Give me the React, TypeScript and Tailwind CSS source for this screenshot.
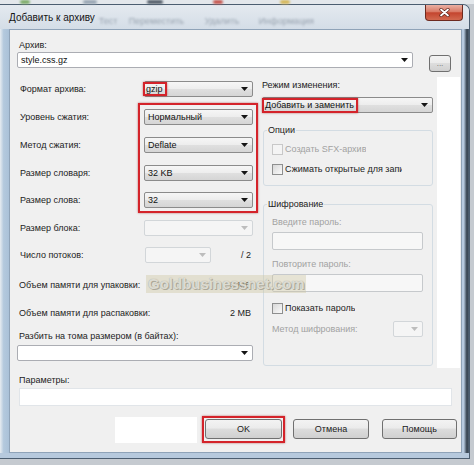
/**
 * 7-Zip style "Добавить к архиву" dialog, Windows 7 Aero frame.
 */
import type { ReactNode } from 'react'

function Arrow({ dim = false }: { dim?: boolean }) {
  return (
    <svg width="7" height="4" viewBox="0 0 7 4" className="ml-auto shrink-0">
      <path d="M0 0H7L3.5 4Z" fill={dim ? '#bdbdbd' : '#141414'} />
    </svg>
  )
}

type ComboKind = 'list' | 'edit' | 'off'

const comboSkin: Record<ComboKind, string> = {
  list: 'border-[#8b8b8b] bg-[linear-gradient(#f6f6f6,#ededed_48%,#dfdfdf_52%,#d5d5d5)]',
  edit: 'border-[#abadb3] bg-white',
  off: 'border-[#d2d6d9] bg-[#f5f5f5]',
}

function Combo({
  kind = 'list',
  width,
  mark = false,
  children,
}: {
  kind?: ComboKind
  width: string
  mark?: boolean
  children?: ReactNode
}) {
  return (
    <div
      className={`flex h-[16px] shrink-0 items-center rounded-[2px] border pr-[4px] ${comboSkin[kind]} ${width} ${
        mark ? 'pl-0' : 'pl-[3px]'
      }`}
    >
      {children}
      <Arrow dim={kind === 'off'} />
    </div>
  )
}

const redMark = 'border-2 border-[#d4232a] shadow-[0_0_2px_rgba(150,0,0,0.55)]'

function Check({ label, disabled = false, clip }: { label: string; disabled?: boolean; clip?: string }) {
  return (
    <div className="flex h-[12px] items-center">
      <span
        className={`h-[11px] w-[11px] shrink-0 border ${
          disabled ? 'border-[#c8c8c8] bg-[#f4f4f4]' : 'border-[#8e8f8f] bg-[linear-gradient(135deg,#d8d8d8,#fafafa)]'
        }`}
      />
      <span
        className={`ml-[2px] overflow-hidden whitespace-nowrap ${clip ?? ''} ${
          disabled ? 'text-[#a2a2a2]' : 'text-[#1c1c1c]'
        }`}
      >
        {label}
      </span>
    </div>
  )
}

// Win7 push button skin, height is given where it is used
const winBtn =
  'flex items-center justify-center rounded-[3px] border border-[#707070] bg-[linear-gradient(#f3f3f3,#ebebeb_45%,#dddddd_50%,#d0d0d0)] text-[#1b1b1b]'

const leftRows = [
  { label: 'Формат архива:', value: 'gzip', gap: 'mt-0', mark: true },
  { label: 'Уровень сжатия:', value: 'Нормальный', gap: 'mt-[12px]' },
  { label: 'Метод сжатия:', value: 'Deflate', gap: 'mt-[12px]' },
  { label: 'Размер словаря:', value: '32 KB', gap: 'mt-[12px]' },
  { label: 'Размер слова:', value: '32', gap: 'mt-[11px]' },
]

export default function App() {
  return (
    <div className="flex h-[465px] w-[474px] flex-col overflow-hidden bg-[#c5cad0] font-['Liberation_Sans',Arial,sans-serif] text-[9px] leading-[12px] text-[#1c1c1c]">
      {/* blurred explorer toolbar behind the glass */}
      <div className="flex h-[4px] shrink-0 items-start bg-[#e3e7eb]">
        <span className="ml-[20px] h-[4px] w-[10px] rounded-full bg-[#7fae6a] blur-[1px]" />
        <span className="ml-[53px] h-[4px] w-[14px] rounded-full bg-[#9aa7b4] blur-[1px]" />
        <span className="ml-[50px] h-[4px] w-[16px] rounded-full bg-[#56606b] blur-[1px]" />
        <span className="ml-[50px] h-[4px] w-[10px] rounded-full bg-[#c7574f] blur-[1px]" />
        <span className="ml-[57px] h-[4px] w-[10px] rounded-full bg-[#d6b85a] blur-[1px]" />
      </div>

      <div className="flex h-[455px] w-[470px] shrink-0 flex-col rounded-tr-[7px] border-y border-r border-[#4b5d70] bg-[#b9cbdf]">
        {/* title bar */}
        <div className="flex h-[24px] shrink-0 items-start rounded-tr-[6px] bg-[linear-gradient(#e4e9ef,#d4dde7)]">
          <span className="ml-[9px] mt-[6px] text-[10px] leading-[13px] text-[#151515]">Добавить к архиву</span>
          <div className="ml-[4px] mt-[10px] flex text-[9px] text-[#98a3af] blur-[0.8px]">
            <span className="w-[30px]">Тест</span>
            <span className="w-[76px]">Переместить</span>
            <span className="w-[54px]">Удалить</span>
            <span>Информация</span>
          </div>
          <div className="ml-auto mr-[6px] flex h-[16px] w-[38px] items-center justify-center rounded-b-[4px] border border-t-0 border-[#6d2a1f] bg-[linear-gradient(#eab0a3,#d97a66_45%,#c4452f_52%,#d2694f)]">
            <svg width="11" height="9" viewBox="0 0 11 9">
              <path d="M2 1.5L9 7.5M9 1.5L2 7.5" stroke="#5b2218" strokeWidth="3.2" strokeLinecap="round" />
              <path d="M2 1.5L9 7.5M9 1.5L2 7.5" stroke="#ffffff" strokeWidth="1.8" strokeLinecap="round" />
            </svg>
          </div>
        </div>

        <div className="flex h-[424px] shrink-0">
          <div className="w-[9px] shrink-0 bg-[linear-gradient(90deg,#e7ecf1,#b4c9dd_40%,#aac1d8)]" />

          {/* client area */}
          <div className="flex h-[424px] w-[453px] shrink-0 flex-col border border-[#8fa3b8] bg-[#f0f0f0] pl-[7px] pt-[9px]">
            <div className="pl-[2px]">Архив:</div>
            <div className="mt-px flex items-start">
              <Combo kind="edit" width="w-[396px]">
                <span className="text-[#111]">style.css.gz</span>
              </Combo>
              <div className={`${winBtn} ml-[16px] mt-[3px] h-[17px] w-[22px] items-end pb-[3px] text-[8px] leading-[8px] text-[#666]`}>
                ...
              </div>
            </div>

            <div className="relative mt-[5px] flex h-[291px]">
              {/* left column */}
              <div className="flex w-[236px] shrink-0 flex-col pt-[4px]">
                {leftRows.map((r) => (
                  <div key={r.label} className={`flex h-[16px] items-center ${r.gap}`}>
                    <span className="w-[127px] shrink-0 pl-[3px]">{r.label}</span>
                    <Combo width="w-[109px]" mark={r.mark}>
                      {r.mark ? (
                        <span className={`${redMark} -ml-[2px] flex h-[14px] items-center pl-px pr-[2px] text-[#111]`}>
                          {r.value}
                        </span>
                      ) : (
                        <span className="text-[#111]">{r.value}</span>
                      )}
                    </Combo>
                  </div>
                ))}
                <div className="mt-[12px] flex h-[16px] items-center">
                  <span className="w-[127px] shrink-0 pl-[3px]">Размер блока:</span>
                  <Combo kind="off" width="w-[109px]" />
                </div>
                <div className="mt-[11px] flex h-[16px] items-center">
                  <span className="w-[128px] shrink-0 pl-[3px]">Число потоков:</span>
                  <Combo kind="off" width="w-[66px]" />
                  <span className="flex-1 pr-[2px] text-right">/ 2</span>
                </div>
                <div className="mt-[16px] flex pl-[2px] pr-[2px]">
                  <span>Объем памяти для упаковки:</span>
                  <span className="ml-auto">3 MB</span>
                </div>
                <div className="mt-[16px] flex pl-[2px] pr-[2px]">
                  <span>Объем памяти для распаковки:</span>
                  <span className="ml-auto">2 MB</span>
                </div>
                <div className="mt-[11px] pl-[2px]">Разбить на тома размером (в байтах):</div>
                <div className="mt-[3px]">
                  <Combo kind="edit" width="w-[236px]" />
                </div>
              </div>

              {/* right column */}
              <div className="ml-[9px] flex w-[171px] shrink-0 flex-col pt-[2px]">
                <div>Режим изменения:</div>
                <div className="mt-[6px]">
                  <Combo width="w-[171px]" mark>
                    <span className={`${redMark} -ml-px flex h-[15px] items-center pl-px pr-[2px] text-[#111]`}>
                      Добавить и заменить
                    </span>
                  </Combo>
                </div>

                <fieldset className="ml-px mt-[11px] h-[62px] w-[170px] rounded-[3px] border border-[#d3dce3]">
                  <legend className="ml-[3px] px-px">Опции</legend>
                  <div className="pl-[8px]">
                    <div className="mt-[7px]">
                      <Check label="Создать SFX-архив" disabled />
                    </div>
                    <div className="mt-[8px]">
                      <Check label="Сжимать открытые для записи" clip="w-[117px]" />
                    </div>
                  </div>
                </fieldset>

                <fieldset className="ml-px mt-[12px] h-[168px] w-[170px] rounded-[3px] border border-[#d3dce3]">
                  <legend className="ml-[3px] px-px">Шифрование</legend>
                  <div className="pl-[8px]">
                    <div className="mt-[6px] text-[#a2a2a2]">Введите пароль:</div>
                    <div className="mt-[4px] h-[18px] w-[151px] rounded-[2px] border border-[#c6c9cc] bg-[#f7f7f7]" />
                    <div className="mt-[8px] text-[#a2a2a2]">Повторите пароль:</div>
                    <div className="mt-[4px] h-[18px] w-[151px] rounded-[2px] border border-[#c6c9cc] bg-[#f7f7f7]" />
                    <div className="mt-[10px]">
                      <Check label="Показать пароль" />
                    </div>
                    <div className="mt-[7px] flex h-[16px] w-[151px] items-center justify-between">
                      <span className="text-[#a2a2a2]">Метод шифрования:</span>
                      <Combo kind="off" width="w-[30px]" />
                    </div>
                  </div>
                </fieldset>
              </div>

              <div className="ml-[4px] h-full w-[23px] shrink-0 bg-white" />

              {/* annotation box around compression settings */}
              <div className={`pointer-events-none absolute left-[121px] top-[26px] h-[110px] w-[120px] ${redMark}`} />

              {/* site watermark */}
              <div className="pointer-events-none absolute left-[129px] top-[198px] flex h-[18px] w-[160px] items-center whitespace-nowrap bg-[rgba(205,198,160,0.4)] pl-[2px] text-[15px] font-bold leading-[18px] text-[rgba(238,237,230,0.8)] [text-shadow:0_0_1px_#9a9787,1px_1px_0_#aeab9c]">
                Goldbusinessnet.com
              </div>
            </div>

            <div className="mt-[6px] pl-[2px]">Параметры:</div>
            <div className="ml-[2px] mt-[2px] h-[18px] w-[433px] border border-[#e1e5e9] bg-white" />

            <div className="mt-[10px] flex items-end">
              <div className="ml-[98px] h-[26px] w-[82px] bg-white" />
              <div className={`${redMark} ml-[5px] h-[27px] w-[83px] pb-[2px] pl-px pr-px pt-px`}>
                <div className={`${winBtn} h-[20px] w-[77px] border-[#3c7fb1] bg-[linear-gradient(#eef6fb,#dcecf5_45%,#c6e0ef_50%,#b4d5e8)]`}>
                  OK
                </div>
              </div>
              <div className={`${winBtn} mb-[4px] ml-[8px] h-[20px] w-[76px]`}>Отмена</div>
              <div className={`${winBtn} mb-[4px] ml-[13px] h-[20px] w-[75px]`}>Помощь</div>
            </div>
          </div>

          <div className="w-[7px] shrink-0 bg-[linear-gradient(90deg,#b8cbe0,#b8cbe0_25%,#33404d_70%,#526374)]" />
        </div>
        <div className="h-[5px] shrink-0 bg-[#b6c9dd]" />
      </div>
    </div>
  )
}
